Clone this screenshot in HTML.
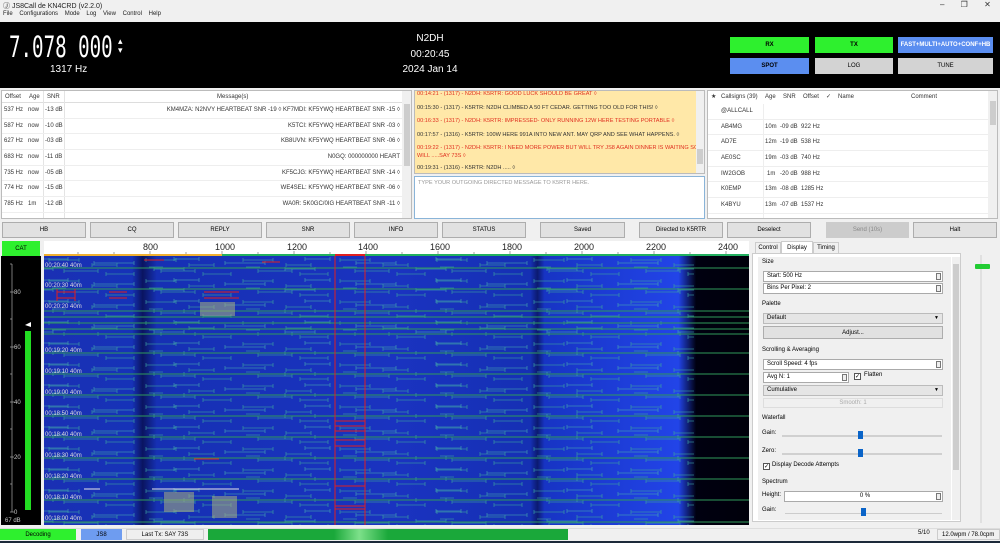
<!DOCTYPE html>
<html><head><meta charset="utf-8"><style>
*{box-sizing:border-box;margin:0;padding:0}
body{width:1000px;height:543px;overflow:hidden;background:#f0f0f0;font-family:"Liberation Sans",sans-serif;position:relative;color:#000}
.a{position:absolute;white-space:nowrap}
.btn{position:absolute;background:#e1e1e1;border:1px solid #adadad;font-size:6px;display:flex;align-items:center;justify-content:center}
.t{font-size:6px;color:#333}
.box{position:absolute;background:#fff;border:1px solid #aaa;font-size:6px;padding-left:3px;line-height:9px}
.cmb{position:absolute;background:#e5e5e5;border:1px solid #bbb;font-size:6px;padding-left:3px;line-height:9px}
.spin{position:absolute;right:1px;top:1px;width:5px;height:7px;border:1px solid #777;background:#eee}
</style></head><body>
<div class="a" style="left:3px;top:1px;font-size:7px;color:#222">Ⓙ JS8Call de KN4CRD (v2.2.0)</div>
<div class="a" style="left:940px;top:0px;font-size:8px;color:#333;word-spacing:14px">– ❐ ✕</div>
<div class="a" style="left:3px;top:11px;font-size:6px;color:#222;word-spacing:5px">File Configurations Mode Log View Control Help</div>

<div class="a" style="left:0;top:22px;width:1000px;height:66px;background:#000"></div>
<div class="a" style="left:9px;top:30px;font-size:29px;color:#fff;font-family:'DejaVu Sans Mono',monospace;transform:scaleX(0.66);transform-origin:0 0;font-weight:300">7.078 000</div>
<div class="a" style="left:118px;top:37px;font-size:9px;color:#fff;line-height:9px">▴<br>▾</div>
<div class="a" style="left:50px;top:64px;font-size:10px;color:#fff">1317 Hz</div>
<div class="a" style="left:380px;top:32px;width:100px;text-align:center;font-size:10px;color:#fff;line-height:14px">N2DH<br><span style="line-height:17px">00:20:45</span><br>2024 Jan 14</div>
<div class="btn" style="left:730px;top:37px;width:79px;height:16px;background:#2ef02e;border:none;font-weight:bold">RX</div>
<div class="btn" style="left:815px;top:37px;width:78px;height:16px;background:#2ef02e;border:none;font-weight:bold">TX</div>
<div class="btn" style="left:898px;top:37px;width:95px;height:16px;background:#5b8ef0;border:none;font-weight:bold;color:#fff">FAST+MULTI+AUTO+CONF+HB</div>
<div class="btn" style="left:730px;top:58px;width:79px;height:16px;background:#5b8ef0;border:none;font-weight:bold">SPOT</div>
<div class="btn" style="left:815px;top:58px;width:78px;height:16px;background:#d3d3d3;border:none">LOG</div>
<div class="btn" style="left:898px;top:58px;width:95px;height:16px;background:#d3d3d3;border:none">TUNE</div>

<!-- band activity -->
<div class="a" style="left:1px;top:90px;width:411px;height:129px;background:#fff;border:1px solid #bbb;overflow:hidden">
<div class="a t" style="left:0;top:0;width:400px;height:12px;border-bottom:1px solid #ddd;line-height:12px">
<span class="a" style="left:3px">Offset</span><span class="a" style="left:27px">Age</span><span class="a" style="left:45px">SNR</span><span class="a" style="left:215px">Message(s)</span></div>
<div class="a" style="left:41px;top:0;width:1px;height:129px;background:#e4e4e4"></div>
<div class="a" style="left:62px;top:0;width:1px;height:129px;background:#e4e4e4"></div>
<div class="a" style="left:400px;top:0;width:10px;height:129px;background:#f0f0f0"></div>
<div class="a" style="left:402px;top:13px;width:6px;height:62px;background:#cdcdcd"></div>
<div class="a" style="left:0;top:12px;width:400px;font-size:6px;color:#333;line-height:15.7px">
<div style="position:relative;height:15.7px;border-bottom:1px solid #eee"><span class="a" style="left:2px">537 Hz</span><span class="a" style="left:26px">now</span><span class="a" style="left:43px">-13 dB</span><span class="a" style="right:2px">KM4MZA: N2NVY HEARTBEAT SNR -19 ◊ KF7MDI: KF5YWQ HEARTBEAT SNR -15 ◊</span></div>
<div style="position:relative;height:15.7px;border-bottom:1px solid #eee"><span class="a" style="left:2px">587 Hz</span><span class="a" style="left:26px">now</span><span class="a" style="left:43px">-10 dB</span><span class="a" style="right:2px">K5TCI: KF5YWQ HEARTBEAT SNR -03 ◊</span></div>
<div style="position:relative;height:15.7px;border-bottom:1px solid #eee"><span class="a" style="left:2px">627 Hz</span><span class="a" style="left:26px">now</span><span class="a" style="left:43px">-03 dB</span><span class="a" style="right:2px">KB8UVN: KF5YWQ HEARTBEAT SNR -06 ◊</span></div>
<div style="position:relative;height:15.7px;border-bottom:1px solid #eee"><span class="a" style="left:2px">683 Hz</span><span class="a" style="left:26px">now</span><span class="a" style="left:43px">-11 dB</span><span class="a" style="right:2px">N0GQ: 000000000 HEART</span></div>
<div style="position:relative;height:15.7px;border-bottom:1px solid #eee"><span class="a" style="left:2px">735 Hz</span><span class="a" style="left:26px">now</span><span class="a" style="left:43px">-05 dB</span><span class="a" style="right:2px">KF5CJG: KF5YWQ HEARTBEAT SNR -14 ◊</span></div>
<div style="position:relative;height:15.7px;border-bottom:1px solid #eee"><span class="a" style="left:2px">774 Hz</span><span class="a" style="left:26px">now</span><span class="a" style="left:43px">-15 dB</span><span class="a" style="right:2px">WE4SEL: KF5YWQ HEARTBEAT SNR -06 ◊</span></div>
<div style="position:relative;height:15.7px;border-bottom:1px solid #eee"><span class="a" style="left:2px">785 Hz</span><span class="a" style="left:26px">1m</span><span class="a" style="left:43px">-12 dB</span><span class="a" style="right:2px">WA0R: 5K0GC/0IG HEARTBEAT SNR -11 ◊</span></div>
</div></div>

<!-- yellow -->
<div class="a" style="left:414px;top:90px;width:291px;height:84px;background:#ffe8a8;border:1px solid #bbb;font-size:5.6px;line-height:13.5px;padding:0 0 0 2px;overflow:hidden">
<div style="color:#e03020;margin-top:-3px">00:14:21 - (1317) - N2DH: K5RTR: GOOD LUCK SHOULD BE GREAT ◊</div>
<div style="color:#333">00:15:30 - (1317) - K5RTR: N2DH  CLIMBED A 50 FT CEDAR. GETTING TOO OLD FOR THIS! ◊</div>
<div style="color:#e03020">00:16:33 - (1317) - N2DH: K5RTR:  IMPRESSED- ONLY RUNNING 12W HERE TESTING PORTABLE ◊</div>
<div style="color:#333">00:17:57 - (1316) - K5RTR: 100W  HERE 991A INTO NEW ANT. MAY QRP AND SEE WHAT HAPPENS. ◊</div>
<div style="color:#e03020;line-height:8px;padding-top:2px">00:19:22 - (1317) - N2DH: K5RTR:  I NEED MORE POWER BUT WILL TRY JS8 AGAIN DINNER IS WAITING SO<br>WILL .....SAY 73S ◊</div>
<div style="color:#333;margin-top:2px">00:19:31 - (1316) - K5RTR: N2DH  ..... ◊</div>
<div class="a" style="left:281px;top:0;width:9px;height:84px;background:#f0f0f0"></div>
<div class="a" style="left:282px;top:58px;width:6px;height:15px;background:#cdcdcd"></div>
</div>
<div class="a" style="left:414px;top:176px;width:291px;height:43px;background:#fff;border:1px solid #8ab4d8;font-size:5.6px;color:#999;padding:3px 3px">TYPE YOUR OUTGOING DIRECTED MESSAGE TO K5RTR HERE.</div>

<!-- callsigns -->
<div class="a" style="left:707px;top:90px;width:291px;height:129px;background:#fff;border:1px solid #bbb;overflow:hidden;font-size:6px;color:#333">
<div class="a" style="left:0;top:0;width:280px;height:13px;line-height:13px"><span class="a" style="left:3px">★</span><span class="a" style="left:13px">Callsigns (39)</span><span class="a" style="left:57px">Age</span><span class="a" style="left:75px">SNR</span><span class="a" style="left:95px">Offset</span><span class="a" style="left:118px">✓</span><span class="a" style="left:130px">Name</span><span class="a" style="left:203px">Comment</span></div>
<div class="a" style="left:0;top:13px;width:280px;line-height:15.7px">
<div style="position:relative;height:15.7px;border-bottom:1px solid #eee"><span class="a" style="left:13px">@ALLCALL</span></div>
<div style="position:relative;height:15.7px;border-bottom:1px solid #eee"><span class="a" style="left:13px">AB4MG</span><span class="a" style="left:57px">10m</span><span class="a" style="left:72px">-09 dB</span><span class="a" style="left:93px">922 Hz</span></div>
<div style="position:relative;height:15.7px;border-bottom:1px solid #eee"><span class="a" style="left:13px">AD7E</span><span class="a" style="left:57px">12m</span><span class="a" style="left:72px">-19 dB</span><span class="a" style="left:93px">538 Hz</span></div>
<div style="position:relative;height:15.7px;border-bottom:1px solid #eee"><span class="a" style="left:13px">AE0SC</span><span class="a" style="left:57px">19m</span><span class="a" style="left:72px">-03 dB</span><span class="a" style="left:93px">740 Hz</span></div>
<div style="position:relative;height:15.7px;border-bottom:1px solid #eee"><span class="a" style="left:13px">IW2GOB</span><span class="a" style="left:59px">1m</span><span class="a" style="left:72px">-20 dB</span><span class="a" style="left:93px">988 Hz</span></div>
<div style="position:relative;height:15.7px;border-bottom:1px solid #eee"><span class="a" style="left:13px">K0EMP</span><span class="a" style="left:57px">13m</span><span class="a" style="left:72px">-08 dB</span><span class="a" style="left:93px">1285 Hz</span></div>
<div style="position:relative;height:15.7px;border-bottom:1px solid #eee"><span class="a" style="left:13px">K4BYU</span><span class="a" style="left:57px">13m</span><span class="a" style="left:72px">-07 dB</span><span class="a" style="left:93px">1537 Hz</span></div>
</div>
<div class="a" style="left:55px;top:13px;width:1px;height:116px;background:#eee"></div>
<div class="a" style="left:280px;top:0;width:10px;height:129px;background:#f0f0f0"></div>
<div class="a" style="left:282px;top:10px;width:6px;height:24px;background:#cdcdcd"></div>
</div>

<!-- button row -->
<div class="btn" style="left:2px;top:222px;width:84px;height:16px">HB</div>
<div class="btn" style="left:90px;top:222px;width:84px;height:16px">CQ</div>
<div class="btn" style="left:178px;top:222px;width:84px;height:16px">REPLY</div>
<div class="btn" style="left:266px;top:222px;width:84px;height:16px">SNR</div>
<div class="btn" style="left:354px;top:222px;width:84px;height:16px">INFO</div>
<div class="btn" style="left:442px;top:222px;width:84px;height:16px">STATUS</div>
<div class="btn" style="left:540px;top:222px;width:85px;height:16px">Saved</div>
<div class="btn" style="left:639px;top:222px;width:84px;height:16px">Directed to K5RTR</div>
<div class="btn" style="left:727px;top:222px;width:84px;height:16px">Deselect</div>
<div class="btn" style="left:826px;top:222px;width:83px;height:16px;background:#ccc;border-color:#ccc;color:#888">Send (10s)</div>
<div class="btn" style="left:913px;top:222px;width:84px;height:16px">Halt</div>

<!-- meter -->
<div class="btn" style="left:2px;top:241px;width:38px;height:15px;background:#2ef02e;border:none">CAT</div>
<div class="a" style="left:1px;top:256px;width:40px;height:269px;background:#000"></div>
<svg class="a" style="left:1px;top:256px" width="40" height="269">
<g stroke="#aaa" stroke-width="0.7"><line x1="11" y1="8" x2="11" y2="256"/>
<line x1="9" y1="8" x2="11" y2="8"/><line x1="9" y1="36" x2="13" y2="36"/><line x1="9" y1="63" x2="11" y2="63"/><line x1="9" y1="91" x2="13" y2="91"/><line x1="9" y1="118" x2="11" y2="118"/><line x1="9" y1="146" x2="13" y2="146"/><line x1="9" y1="173" x2="11" y2="173"/><line x1="9" y1="201" x2="13" y2="201"/><line x1="9" y1="228" x2="11" y2="228"/><line x1="9" y1="256" x2="13" y2="256"/></g>
<g fill="#ccc" font-size="6" font-family="Liberation Sans"><text x="13" y="38">80</text><text x="13" y="93">60</text><text x="13" y="148">40</text><text x="13" y="203">20</text><text x="13" y="258">0</text></g>
<rect x="24" y="75" width="6" height="179" fill="#22dd22"/>
<text x="4" y="266" fill="#ccc" font-size="6" font-family="Liberation Sans">67 dB</text>
<polygon points="24,69 30,66 30,71" fill="#fff"/>
</svg>

<!-- scale -->
<div class="a" style="left:44px;top:241px;width:705px;height:15px;background:#fff"></div>
<svg class="a" style="left:44px;top:241px" width="705" height="15" font-family="Liberation Sans" font-size="9" fill="#222">
<text x="99" y="9">800</text><text x="171" y="9">1000</text><text x="243" y="9">1200</text><text x="314" y="9">1400</text><text x="386" y="9">1600</text><text x="458" y="9">1800</text><text x="530" y="9">2000</text><text x="602" y="9">2200</text><text x="674" y="9">2400</text>
<g stroke="#666" stroke-width="0.6"><path d="M34 11v2M70 11v2M106 10v3M142 11v2M178 10v3M214 11v2M250 10v3M286 11v2M322 10v3M358 11v2M394 10v3M430 11v2M466 10v3M502 11v2M538 10v3M574 11v2M610 10v3M646 11v2M682 10v3"/></g>
<rect x="0" y="13" width="178" height="2" fill="#f0b030"/><rect x="178" y="13" width="527" height="2" fill="#22b060"/><rect x="291" y="13" width="30" height="2" fill="#e02020"/>
</svg>

<!-- waterfall -->
<svg class="a" style="left:44px;top:256px" width="705" height="269">
<defs>
<linearGradient id="g" x1="0" x2="1"><stop offset="0" stop-color="#1a30b4"/><stop offset="0.125" stop-color="#1632b8"/><stop offset="0.14" stop-color="#0a1460"/><stop offset="0.16" stop-color="#1630b4"/><stop offset="0.5" stop-color="#1a33c0"/><stop offset="0.69" stop-color="#1530b4"/><stop offset="0.7" stop-color="#0c1a70"/><stop offset="0.71" stop-color="#1734c4"/><stop offset="0.9" stop-color="#2244e8"/><stop offset="0.925" stop-color="#000010"/><stop offset="1" stop-color="#00000a"/></linearGradient>
<pattern id="p" width="97" height="21" patternUnits="userSpaceOnUse">
<g stroke="#3aa0a0" stroke-width="0.8" fill="none" opacity="0.8"><path d="M5 4h30M5 2v4M35 2v4M48 9h25M48 7v4M73 7v4M20 15h34M20 13v4M54 13v4M62 18h28M62 16v4M90 16v4M8 11h14"/></g>
</pattern>
<pattern id="p2" width="131" height="21" x="40" patternUnits="userSpaceOnUse">
<g stroke="#48b0b0" stroke-width="0.8" fill="none" opacity="0.7"><path d="M10 7h40M10 5v4M50 5v4M70 13h30M70 11v4M100 11v4M90 3h25M90 1v4M115 1v4"/></g>
</pattern>
</defs>
<rect width="705" height="269" fill="url(#g)"/>
<rect width="650" height="269" fill="url(#p)"/>
<rect width="650" height="269" fill="url(#p2)"/>
<g stroke="#2f9a5a" stroke-width="1"><path d="M0 12h705M0 33h705M0 55h705M0 61h705M0 67h705M0 73h705M0 78h705M0 97h705M0 118h705M0 139h705M0 160h705M0 181h705M0 202h705M0 223h705M0 244h705M0 266h705"/></g>
<g stroke="#e02020" stroke-width="1" fill="none"><path d="M291 0v269M321 0v269M291 165h30M291 170h30M291 175h30M291 184h30M291 190h30M291 230h30M291 250h30M291 253h30M13 36h18M13 42h18M13 33v12M31 33v12M65 36h18M65 42h18M160 36h35M160 42h35M150 203h25M218 6h18M100 4h20"/></g>
<g fill="#a8b080" opacity="0.55"><rect x="156" y="46" width="35" height="14"/><rect x="120" y="236" width="30" height="20"/><rect x="168" y="240" width="25" height="22"/></g>
<g stroke="#e8e8e8" stroke-width="1"><path d="M108 233h20M40 233h16M120 233h40M160 233h35"/></g>
<g fill="#ddd" font-family="Liberation Sans" font-size="6"><text x="1" y="11">00:20:40   40m</text><text x="1" y="31">00:20:30   40m</text><text x="1" y="52">00:20:20   40m</text><text x="1" y="96">00:19:20   40m</text><text x="1" y="117">00:19:10   40m</text><text x="1" y="138">00:19:00   40m</text><text x="1" y="159">00:18:50   40m</text><text x="1" y="180">00:18:40   40m</text><text x="1" y="201">00:18:30   40m</text><text x="1" y="222">00:18:20   40m</text><text x="1" y="243">00:18:10   40m</text><text x="1" y="264">00:18:00   40m</text></g>
</svg>

<!-- right panel -->
<div class="a" style="left:755px;top:242px;width:26px;height:11px;font-size:6px;line-height:11px;text-align:center;border:1px solid #ccc;border-bottom:none">Control</div>
<div class="a" style="left:781px;top:241px;width:32px;height:12px;font-size:6px;line-height:12px;text-align:center;background:#fff;border:1px solid #ccc;border-bottom:none">Display</div>
<div class="a" style="left:813px;top:242px;width:26px;height:11px;font-size:6px;line-height:11px;text-align:center;border:1px solid #ccc;border-bottom:none">Timing</div>
<div class="a" style="left:752px;top:253px;width:209px;height:269px;background:#fff;border:1px solid #ccc"></div>
<div class="a" style="left:758px;top:257px;width:193px;height:263px;background:#f0f0f0"></div>
<div class="a" style="left:952px;top:257px;width:8px;height:263px;background:#f0f0f0"></div>
<div class="a" style="left:953px;top:264px;width:6px;height:206px;background:#cdcdcd"></div>
<div class="a" style="left:762px;top:259px;font-size:6px">Size</div>
<div class="box" style="left:763px;top:271px;width:180px;height:11px">Start: 500 Hz<div class="spin"></div></div>
<div class="box" style="left:763px;top:283px;width:180px;height:11px">Bins Per Pixel: 2<div class="spin"></div></div>
<div class="a" style="left:762px;top:301px;font-size:6px">Palette</div>
<div class="cmb" style="left:763px;top:313px;width:180px;height:11px">Default<span style="position:absolute;right:3px;font-size:5px">▼</span></div>
<div class="btn" style="left:763px;top:326px;width:180px;height:13px;background:#e1e1e1">Adjust...</div>
<div class="a" style="left:762px;top:347px;font-size:6px">Scrolling &amp; Averaging</div>
<div class="box" style="left:763px;top:359px;width:180px;height:11px">Scroll Speed: 4 fps<div class="spin"></div></div>
<div class="box" style="left:763px;top:372px;width:86px;height:11px">Avg N: 1<div class="spin"></div></div>
<div class="a" style="left:854px;top:373px;width:7px;height:7px;border:1px solid #555;background:#fff;font-size:6px;line-height:6px">✓</div>
<div class="a" style="left:864px;top:372px;font-size:6px">Flatten</div>
<div class="cmb" style="left:763px;top:385px;width:180px;height:11px">Cumulative<span style="position:absolute;right:3px;font-size:5px">▼</span></div>
<div class="a" style="left:763px;top:398px;width:180px;height:10px;border:1px solid #ddd;font-size:6px;color:#aaa;text-align:center;line-height:9px">Smooth: 1</div>
<div class="a" style="left:762px;top:415px;font-size:6px">Waterfall</div>
<div class="a" style="left:762px;top:430px;font-size:6px">Gain:</div>
<div class="a" style="left:782px;top:435px;width:160px;height:2px;background:#d0d0d0"></div>
<div class="a" style="left:858px;top:431px;width:5px;height:8px;background:#0a64c8"></div>
<div class="a" style="left:762px;top:448px;font-size:6px">Zero:</div>
<div class="a" style="left:782px;top:453px;width:160px;height:2px;background:#d0d0d0"></div>
<div class="a" style="left:858px;top:449px;width:5px;height:8px;background:#0a64c8"></div>
<div class="a" style="left:763px;top:463px;width:7px;height:7px;border:1px solid #555;background:#fff;font-size:6px;line-height:6px">✓</div>
<div class="a" style="left:772px;top:462px;font-size:6px">Display Decode Attempts</div>
<div class="a" style="left:762px;top:479px;font-size:6px">Spectrum</div>
<div class="a" style="left:762px;top:492px;font-size:6px">Height:</div>
<div class="box" style="left:784px;top:491px;width:159px;height:11px;text-align:center">0 %<div class="spin"></div></div>
<div class="a" style="left:762px;top:507px;font-size:6px">Gain:</div>
<div class="a" style="left:785px;top:513px;width:157px;height:1px;background:#ccc"></div>
<div class="a" style="left:861px;top:508px;width:5px;height:8px;background:#0a64c8"></div>
<!-- slider column -->
<div class="a" style="left:980px;top:255px;width:2px;height:268px;background:#e0e0e0"></div>
<div class="a" style="left:975px;top:264px;width:15px;height:5px;background:#22cc33;border-radius:1px"></div>

<!-- status bar -->
<div class="a" style="left:0;top:528px;width:1000px;height:13px;background:#f0f0f0;border-top:1px solid #ddd"></div>
<div class="btn" style="left:0;top:529px;width:76px;height:11px;background:#2ef02e;border:none">Decoding</div>
<div class="btn" style="left:81px;top:529px;width:41px;height:11px;background:#6e9cf0;border:none">JS8</div>
<div class="btn" style="left:126px;top:529px;width:78px;height:11px;background:#efefef;border:1px solid #ccc">Last Tx: SAY 73S</div>
<div class="a" style="left:208px;top:529px;width:360px;height:11px;background:linear-gradient(90deg,#1aa83a 0,#1aa83a 35%,#7de08a 42%,#1aa83a 50%,#1aa83a 100%)"></div>
<div class="a" style="left:918px;top:530px;font-size:6px">5/10</div>
<div class="a" style="left:937px;top:529px;width:63px;height:11px;border:1px solid #ccc;font-size:6px;line-height:10px;padding-left:4px">12.0wpm / 78.0cpm</div>
<div class="a" style="left:0;top:541px;width:1000px;height:2px;background:#1c2a3a"></div>
</body></html>
